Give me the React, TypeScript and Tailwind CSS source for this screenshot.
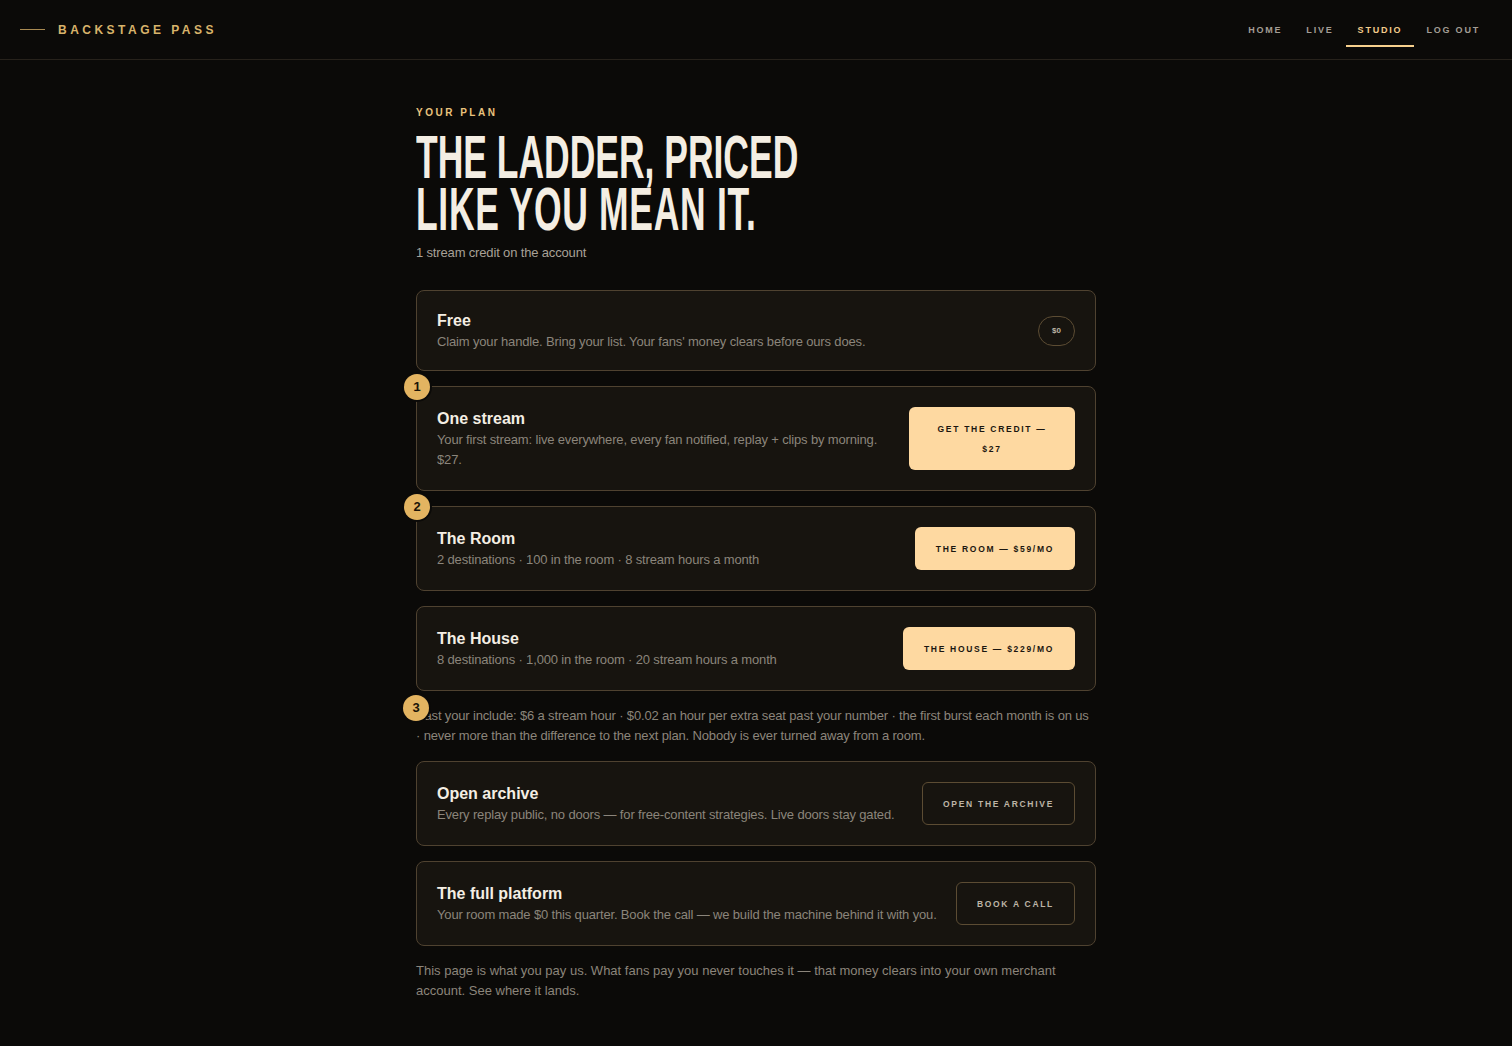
import React from 'react'

const sans = { fontFamily: '"Liberation Sans", Arial, sans-serif' }

type Plan = {
  title: string
  desc: string
  badge?: string
  action: React.ReactNode
  tight?: boolean
}

function Badge({ n, className = '' }: { n: string; className?: string }) {
  return (
    <span
      className={`absolute flex h-[26px] w-[26px] items-center justify-center rounded-full bg-[#e3b461] text-[13px] font-bold tracking-normal text-[#1a1408] ring-2 ring-[#0b0a08] ${className}`}
    >
      {n}
    </span>
  )
}

function SolidButton({ children, className = '' }: { children: React.ReactNode; className?: string }) {
  return (
    <button
      className={`shrink-0 rounded-[6px] bg-[#fed9a1] px-[21px] py-[11.5px] text-center text-[8.5px] font-bold uppercase leading-[20px] tracking-[0.2em] text-[#1b1610] ${className}`}
    >
      {children}
    </button>
  )
}

function GhostButton({ children }: { children: React.ReactNode }) {
  return (
    <button className="shrink-0 rounded-[6px] border border-[#5c4c33] px-[20px] py-[10.5px] text-[8.5px] font-bold uppercase leading-[20px] tracking-[0.2em] text-[#bdb4a6]">
      {children}
    </button>
  )
}

function PlanCard({ plan }: { plan: Plan }) {
  return (
    <div
      className={`relative flex items-center gap-4 rounded-[8px] border border-[#4f4230] bg-[#17140f] pl-[20px] pr-[20px] ${
        plan.tight ? 'py-[18px]' : 'py-5'
      }`}
    >
      {plan.badge && <Badge n={plan.badge} className="-left-[13px] -top-[13px]" />}
      <div className="min-w-0 flex-1">
        <div className="text-[16px] font-bold leading-[23px] text-[#f4eee3]">{plan.title}</div>
        <p className="text-[13px] leading-[20px] tracking-[-0.012em] text-[#8b857b]">{plan.desc}</p>
      </div>
      {plan.action}
    </div>
  )
}

const tiers: Plan[] = [
  {
    title: 'Free',
    desc: "Claim your handle. Bring your list. Your fans' money clears before ours does.",
    tight: true,
    action: (
      <span className="flex h-[30px] w-[37px] shrink-0 items-center justify-center rounded-full border border-[#5c4c33] text-[8px] font-bold text-[#bdb4a6]">
        $0
      </span>
    ),
  },
  {
    title: 'One stream',
    desc: 'Your first stream: live everywhere, every fan notified, replay + clips by morning. $27.',
    badge: '1',
    action: <SolidButton className="w-[166px]">Get the credit — $27</SolidButton>,
  },
  {
    title: 'The Room',
    desc: '2 destinations · 100 in the room · 8 stream hours a month',
    badge: '2',
    action: <SolidButton>The Room — $59/mo</SolidButton>,
  },
  {
    title: 'The House',
    desc: '8 destinations · 1,000 in the room · 20 stream hours a month',
    action: <SolidButton>The House — $229/mo</SolidButton>,
  },
]

const extras: Plan[] = [
  {
    title: 'Open archive',
    desc: 'Every replay public, no doors — for free-content strategies. Live doors stay gated.',
    action: <GhostButton>Open the archive</GhostButton>,
  },
  {
    title: 'The full platform',
    desc: 'Your room made $0 this quarter. Book the call — we build the machine behind it with you.',
    action: <GhostButton>Book a call</GhostButton>,
  },
]

const nav = ['Home', 'Live', 'Studio', 'Log out']

export default function App() {
  return (
    <div className="min-h-screen bg-[#0b0a08] text-[#f4eee3]" style={sans}>
      <header className="flex h-[60px] items-center justify-between border-b border-[#27221b] px-5">
        <div className="flex items-center gap-[13px]">
          <span className="h-px w-[25px] bg-[#a88a52]" />
          <span className="text-[12px] font-bold uppercase tracking-[0.29em] text-[#d8b36b]">Backstage Pass</span>
        </div>
        <nav className="flex items-stretch self-stretch pt-[16px]">
          {nav.map((item) => {
            const active = item === 'Studio'
            return (
              <a
                key={item}
                className={`mb-[12px] flex items-center border-b-2 px-3 text-[9px] font-bold uppercase tracking-[0.2em] ${
                  active ? 'border-[#f6cf8d] text-[#f3cd8c]' : 'border-transparent text-[#a39d94]'
                }`}
              >
                {item}
              </a>
            )
          })}
        </nav>
      </header>

      <main className="mx-auto w-[680px] pb-[44px] pt-[45px]">
        <div className="text-[10px] font-bold uppercase tracking-[0.25em] text-[#e9c27d]">Your plan</div>
        <h1 className="mt-[11px] origin-left scale-x-[0.572] whitespace-nowrap text-[62px] font-bold uppercase leading-[52px] text-[#f4eee3]">
          The ladder, priced
          <br />
          <span className="tracking-[0.02em]">like you mean it.</span>
        </h1>
        <p className="mt-[8px] text-[13px] leading-[20px] tracking-[-0.012em] text-[#a8a197]">
          1 stream credit on the account
        </p>

        <div className="mt-[27px] flex flex-col gap-[15px]">
          {tiers.map((t) => (
            <PlanCard key={t.title} plan={t} />
          ))}
          <p className="relative text-[13px] leading-[20px] tracking-[-0.012em] text-[#8b857b]">
            <Badge n="3" className="-left-[13px] -top-[11px]" />
            Past your include: $6 a stream hour · $0.02 an hour per extra seat past your number · the first burst each
            month is on us · never more than the difference to the next plan. Nobody is ever turned away from a room.
          </p>
          {extras.map((t) => (
            <PlanCard key={t.title} plan={t} />
          ))}
          <p className="text-[13px] leading-[20px] text-[#8b857b]">
            This page is what you pay us. What fans pay you never touches it — that money clears into your own merchant
            account. See where it lands.
          </p>
        </div>
      </main>
    </div>
  )
}
